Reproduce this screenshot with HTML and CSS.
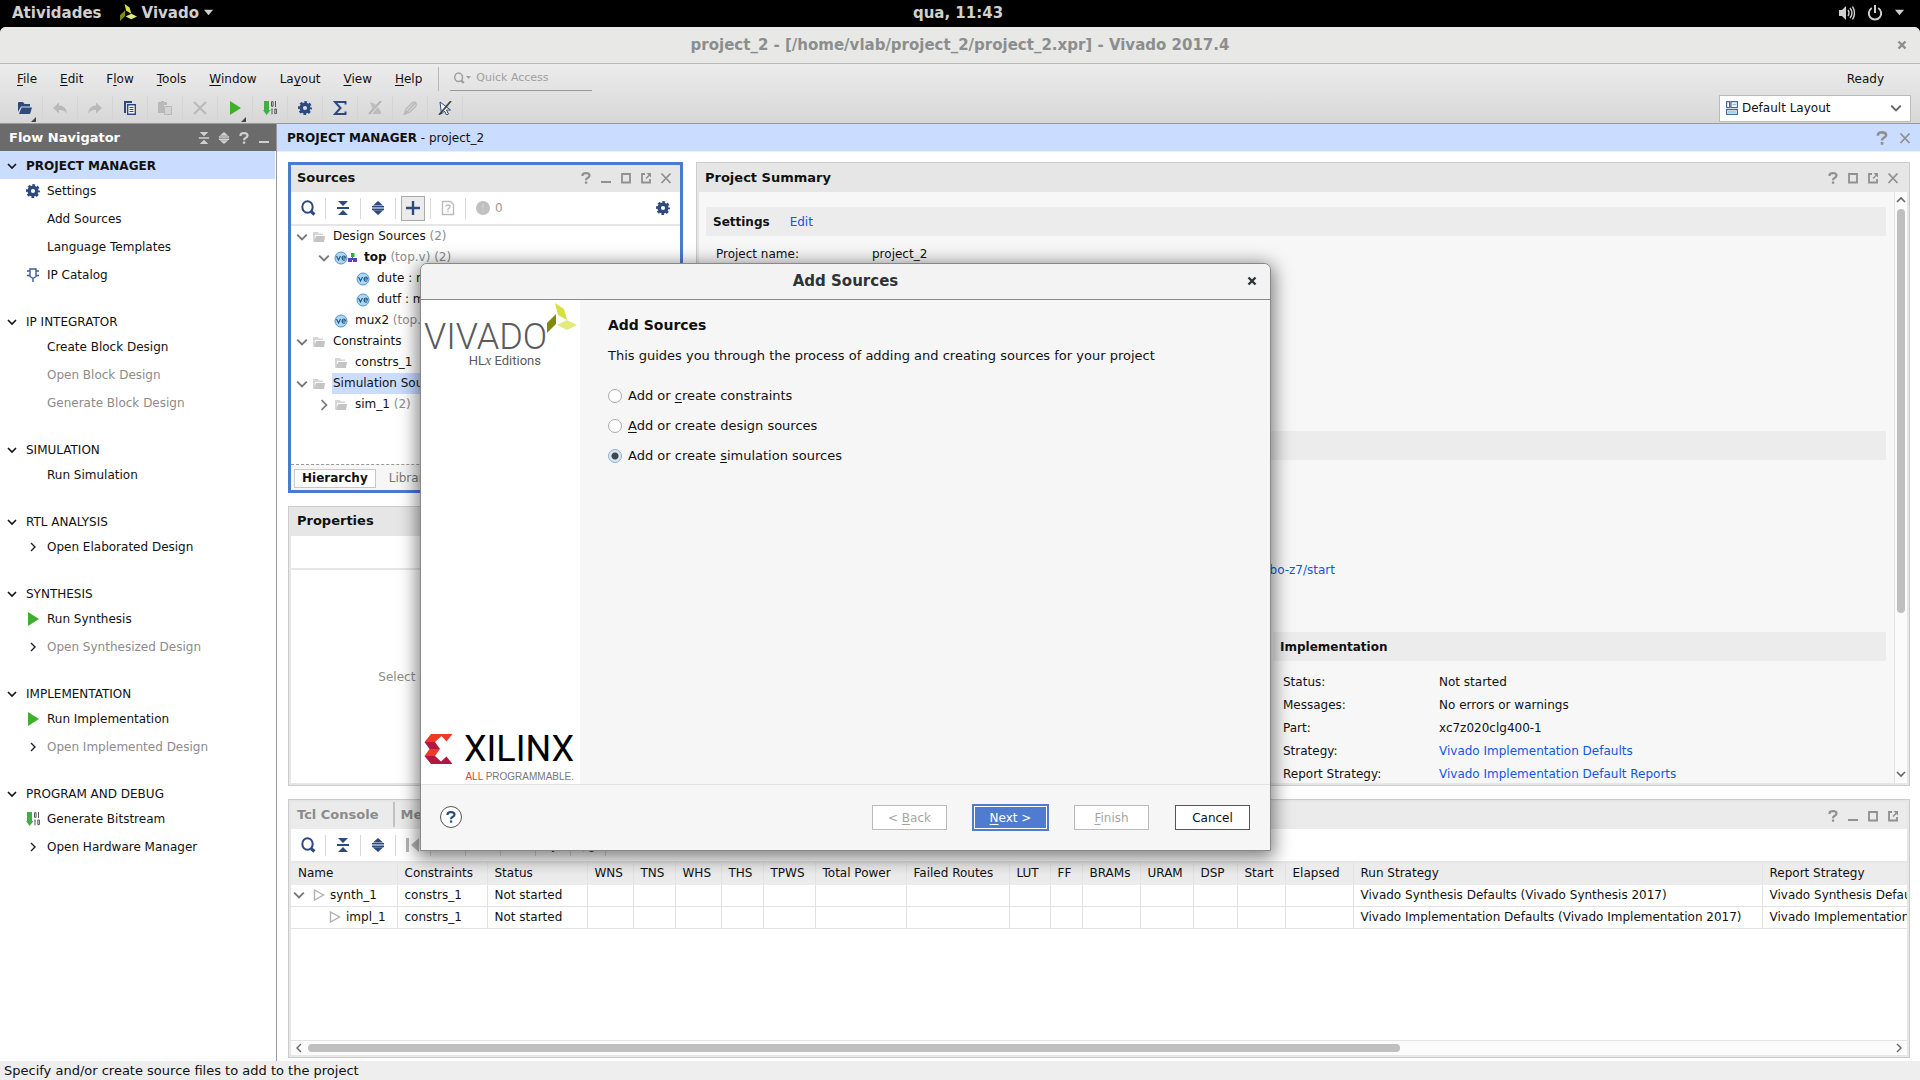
FILE: index.html
```html
<!DOCTYPE html>
<html lang="en">
<head>
<meta charset="utf-8">
<title>Vivado 2017.4</title>
<link rel="stylesheet" href="styles.css">
</head>
<body>
<svg class="sprite" aria-hidden="true">
  <symbol id="leaf" viewBox="0 0 30 30"><path d="M8 0l9 6 3 11-9-5z" fill="#d5e13c"/><path d="M0 20l9-9v10l-9 9z" fill="#828a0e"/><path d="M10 22l10-5 10 5-10 5z" fill="#e3ea7c"/></symbol>
  <symbol id="down" viewBox="0 0 10 10"><path d="M1 3l4 4 4-4" fill="none" stroke="currentColor" stroke-width="1.600"/></symbol>
  <symbol id="right" viewBox="0 0 10 10"><path d="M3 1l4 4-4 4" fill="none" stroke="currentColor" stroke-width="1.4"/></symbol>
  <symbol id="caret" viewBox="0 0 10 10"><path d="M0 2h10L5 8z" fill="currentColor"/></symbol>
  <symbol id="help" viewBox="0 0 12 12"><path d="M2.500 4V3.500Q2.500 1.200 6 1.200T9.500 3.600Q9.500 5 7.500 5.900 6 6.600 6 8.200" fill="none" stroke="currentColor" stroke-width="2.200"/><path d="M4.900 9.500h2.300v2.200H4.900z" fill="currentColor"/></symbol>
  <symbol id="min" viewBox="0 0 12 12"><path d="M1 9h10v2H1z" fill="currentColor"/></symbol>
  <symbol id="max" viewBox="0 0 12 12"><path d="M2 2h8v8.500H2z" fill="none" stroke="currentColor" stroke-width="1.800"/></symbol>
  <symbol id="float" viewBox="0 0 12 12"><path d="M5 2H2v8.500h8V7" fill="none" stroke="currentColor" stroke-width="1.800"/><path d="M6.500 1H11v4.500L9.500 4 6.500 7 5.500 6l3-3z" fill="currentColor"/></symbol>
  <symbol id="close" viewBox="0 0 12 12"><path d="M1.500 1.500l9 9.500M10.500 1.500l-9 9.500" fill="none" stroke="currentColor" stroke-width="1.800"/></symbol>
  <symbol id="wclose" viewBox="0 0 10 10"><path d="M1.500 1.500l7 7M8.500 1.500l-7 7" fill="none" stroke="currentColor" stroke-width="2.400"/></symbol>
  <symbol id="collapse" viewBox="0 0 14 14"><path d="M2 0h10L7 5zM2 14h10L7 9zM1 6h12v2H1z" fill="currentColor"/></symbol>
  <symbol id="expand" viewBox="0 0 14 14"><path d="M2 4.500h10L7 0zM2 9.500h10L7 14zM1 5h12v1.600H1zM1 7.600h12v1.600H1z" fill="currentColor"/></symbol>
  <symbol id="search" viewBox="0 0 16 16"><ellipse cx="7.500" cy="7" rx="5.200" ry="5.800" fill="none" stroke="currentColor" stroke-width="2"/><path d="M11 11.500l3.500 3" stroke="currentColor" stroke-width="3"/></symbol>
  <symbol id="plus" viewBox="0 0 14 14"><path d="M5.800 0h2.400v5.800H14v2.400H8.200V14H5.800V8.200H0V5.800h5.800z" fill="currentColor"/></symbol>
  <symbol id="gear" viewBox="0 0 14 14"><g stroke="currentColor" fill="none"><circle cx="7" cy="7" r="3.800" stroke-width="3.400"/><circle cx="7" cy="7" r="6" stroke-width="2" stroke-dasharray="2.700 2.012" stroke-dashoffset="1.350"/></g></symbol>
  <symbol id="filehelp" viewBox="0 0 14 16"><path d="M1.500 1.500h8l3 3v10h-11z" fill="none" stroke="currentColor" stroke-width="1.400"/><path d="M4.800 6.500Q5 5 7 5T9 6.800Q9 7.800 7 9v1M6.300 11.500h1.400" fill="none" stroke="currentColor" stroke-width="1.300"/></symbol>
  <symbol id="alert" viewBox="0 0 14 14"><circle cx="7" cy="7" r="7" fill="#c0c0c0"/><path d="M6.200 3h1.600v5H6.200zM6.200 9.500h1.600V11H6.200z" fill="#d0d0d0"/></symbol>
  <symbol id="folder" viewBox="0 0 14 12"><path d="M1 1h5l1 1.500h4V4H3v6L1 11z" fill="#d6d6d6"/><path d="M4 5h9l-1 6H2z" fill="#c4c4c4"/></symbol>
  <symbol id="module" viewBox="0 0 14 14"><circle cx="7" cy="7" r="6" fill="#a9d8f7" stroke="#5795c8"/><path d="M2.500 5l2 4 2-4M8 7h3.500Q11.300 5 9.800 5 8 5 8 7T9.900 9.200l1.400-.4" fill="none" stroke="#23507a" stroke-width="1.100"/></symbol>
  <symbol id="hier" viewBox="0 0 9 9"><path d="M3 0h3.500v4H3z" fill="#2fb12f"/><path d="M0 5h4v4H0zM5 5h4v4H5z" fill="#5a3fbf"/><path d="M4 4h1v3H4z" fill="#5a3fbf"/></symbol>
  <symbol id="chip" viewBox="0 0 14 14"><path d="M4 1h6v7.500l-3 2-3-2zM1 3h3M1 7.500h3M10 3h3M10 7.500h3M7 10v4" fill="none" stroke="#3c5c94" stroke-width="1.400"/></symbol>
  <symbol id="play" viewBox="0 0 12 14"><path d="M1 0l11 7-11 7z" fill="#3fb02b"/></symbol>
  <symbol id="playo" viewBox="0 0 12 12"><path d="M1.500 1l9 5-9 5z" fill="none" stroke="#b0b0b0" stroke-width="1.400"/></symbol>
  <symbol id="bits" viewBox="0 0 14 14"><path d="M1 0h5v9h1.500L3.600 14 0 9h1z" fill="#42ae48"/><path d="M8.500.7h1.600v4.600H8.500zM12.500 0v6M8.500 8h1M9 8v5.300M11.800 8h1.600v4.600h-1.600z" fill="none" stroke="#555"/></symbol>
  <symbol id="open" viewBox="0 0 14 12"><path d="M0 1q0-1 1-1h4l1.500 2H12v2.500H3L0 10z" fill="#2c4a80"/><path d="M3.500 5.500H14L12 12H1z" fill="#2c4a80"/></symbol>
  <symbol id="undo" viewBox="0 0 14 11"><path d="M6 0v3q7 0 8 8-3-4-8-3.500V11L0 5.500z" fill="#b9b9b9"/></symbol>
  <symbol id="redo" viewBox="0 0 14 11"><path d="M8 0v3Q1 3 0 11q3-4 8-3.500V11l6-5.500z" fill="#b9b9b9"/></symbol>
  <symbol id="copy" viewBox="0 0 12 14"><path d="M0 0h8v2H2v10H0z" fill="#2c4a80"/><path d="M3.700 3.700h7.600v9.600H3.700z" fill="#fff" stroke="#2c4a80" stroke-width="1.400"/><path d="M5.500 6.500h4M5.500 8.500h4M5.500 10.500h4" stroke="#2c4a80"/></symbol>
  <symbol id="paste" viewBox="0 0 14 14"><path d="M0 1h3V0h3v1h3v3H6v8H0z" fill="#b9b9b9"/><path d="M6.500 5.500h7v8h-7z" fill="#d3d3d3" stroke="#b9b9b9"/></symbol>
  <symbol id="cut" viewBox="0 0 14 14"><path d="M1 1l12 12M13 1L1 13" stroke="#b9b9b9" stroke-width="2"/></symbol>
  <symbol id="sigma" viewBox="0 0 14 14"><path d="M12.500 3.500V1H2l5.500 6L2 13h10.500v-2.500" fill="none" stroke="#2c4a80" stroke-width="2"/></symbol>
  <symbol id="mark1" viewBox="0 0 14 14"><path d="M1 13L13 0" stroke="#b4b4b4" stroke-width="2"/><path d="M2 1l5 2 1 3-3 3zM10 6l3 5v2H4z" fill="#bcbcbc"/></symbol>
  <symbol id="mark2" viewBox="0 0 14 14"><path d="M1.500 13l1.500-5 6-6q2-1.500 3.500 0t0 3.500l-6 6z" fill="none" stroke="#b9b9b9" stroke-width="1.400"/><path d="M1 14L13 1" stroke="#b9b9b9" stroke-width="1.800"/></symbol>
  <symbol id="mark3" viewBox="0 0 14 14"><path d="M2 1l1.500 12 3-3 2 4 2-1-2-4h4z" fill="#fff" stroke="#2c4a80"/><path d="M1 14L13 0" stroke="#444" stroke-width="1.800"/></symbol>
  <symbol id="first" viewBox="0 0 16 16"><path d="M1 1h3v14H1zM14 1v14L6 8z" fill="#b5b5b5"/></symbol>
  <symbol id="rew" viewBox="0 0 16 16"><path d="M7 2v12L0 8zM15 2v12L8 8z" fill="#b5b5b5"/></symbol>
  <symbol id="fwd" viewBox="0 0 16 16"><path d="M9 2v12l7-6zM1 2v12l7-6z" fill="#b5b5b5"/></symbol>
  <symbol id="pct" viewBox="0 0 14 14"><g fill="none" stroke="#2c4a80" stroke-width="1.800"><circle cx="3.500" cy="3.500" r="2.500"/><circle cx="10.500" cy="10.500" r="2.500"/><path d="M12 1L2 13"/></g></symbol>
  <symbol id="layout" viewBox="0 0 12 14"><path d="M.6.600h3v6h-3zM5 .600h6.400v6H5zM.6 8.600h10.800v4.800H.6z" fill="#fff" stroke="#4a6a9c" stroke-width="1.200"/><path d="M6.500 3.500h3.500M2 11h8" stroke="#7fc4e8" stroke-width="1.500"/></symbol>
  <symbol id="sound" viewBox="0 0 16 16"><path d="M0 5h3l4-4v14l-4-4H0z" fill="#d0d0d0"/><path d="M9 5q2 3 0 6M11 3q4 5 0 10M13.500 1.500q4 6.500 0 13" fill="none" stroke="#d0d0d0" stroke-width="1.400"/></symbol>
  <symbol id="power" viewBox="0 0 16 16"><path d="M4.800 3A6.200 6.200 0 1 0 11.200 3M8 0v8" fill="none" stroke="#d0d0d0" stroke-width="2"/></symbol>
  <symbol id="xlogo" viewBox="0 0 28 30"><path d="M6.500 0H28l-6 7.500L17 2l-6.500 6H0z" fill="#ef3b24"/><path d="M0 8h10.500l5 7-4.500 0H5z" fill="#b3173f"/><path d="M5 15h10.500l-5 7H0z" fill="#ef3b24"/><path d="M0 22h10.500l6 5.500L22 22.500l6 7.500H6.500z" fill="#b3173f"/></symbol>
</svg>

<header class="desktop-bar">
  <div class="desk-left"><span>Atividades</span><span class="app"><svg class="i14"><use href="#leaf"/></svg>Vivado <svg class="i9"><use href="#caret"/></svg></span></div>
  <span>qua, 11:43</span>
  <div class="desk-right"><svg class="i16"><use href="#sound"/></svg><svg class="i16"><use href="#power"/></svg><svg class="i9"><use href="#caret"/></svg></div>
</header>

<div class="window">
  <div class="titlebar"><h1>project_2 - [/home/vlab/project_2/project_2.xpr] - Vivado 2017.4</h1><button class="plain" aria-label="Close window"><svg class="i10"><use href="#wclose"/></svg></button></div>

  <div class="topbars">
    <div class="menurow">
      <nav class="menu"><button><u>F</u>ile</button><button><u>E</u>dit</button><button>F<u>l</u>ow</button><button><u>T</u>ools</button><button><u>W</u>indow</button><button>La<u>y</u>out</button><button><u>V</u>iew</button><button><u>H</u>elp</button></nav>
      <label class="quick"><svg class="i12"><use href="#search"/></svg><svg class="i5"><use href="#caret"/></svg><input type="text" placeholder="Quick Access" aria-label="Quick Access"></label>
      <span class="ready">Ready</span>
    </div>
    <div class="toolrow">
      <div class="tools">
        <button class="drop" aria-label="Open"><svg class="i14"><use href="#open"/></svg></button>
        <button aria-label="Undo"><svg class="i14"><use href="#undo"/></svg></button>
        <button aria-label="Redo"><svg class="i14"><use href="#redo"/></svg></button>
        <button aria-label="Copy"><svg class="i14"><use href="#copy"/></svg></button>
        <button aria-label="Paste"><svg class="i14"><use href="#paste"/></svg></button>
        <button aria-label="Delete"><svg class="i14"><use href="#cut"/></svg></button>
        <button class="drop" aria-label="Run"><svg class="i14"><use href="#play"/></svg></button>
        <button aria-label="Bitstream"><svg class="i14"><use href="#bits"/></svg></button>
        <button class="blue" aria-label="Settings"><svg class="i14"><use href="#gear"/></svg></button>
        <button aria-label="Reports"><svg class="i14"><use href="#sigma"/></svg></button>
        <button aria-label="Marks"><svg class="i14"><use href="#mark1"/></svg></button>
        <button aria-label="Highlights"><svg class="i14"><use href="#mark2"/></svg></button>
        <button aria-label="Selection"><svg class="i14"><use href="#mark3"/></svg></button>
      </div>
      <label class="layout-pick"><svg class="i14"><use href="#layout"/></svg><select aria-label="Layout"><option>Default Layout</option></select><svg class="i12"><use href="#down"/></svg></label>
    </div>
  </div>

  <div class="main">
    <aside class="navigator">
      <div class="nav-head"><h2>Flow Navigator</h2><span class="ctl"><svg class="i12"><use href="#collapse"/></svg><svg class="i12"><use href="#expand"/></svg><svg class="i12"><use href="#help"/></svg><svg class="i12"><use href="#min"/></svg></span></div>
      <section><h3 class="current"><svg class="i10"><use href="#down"/></svg>PROJECT MANAGER</h3>
        <ul><li><svg class="i14 blue"><use href="#gear"/></svg>Settings</li><li>Add Sources</li><li>Language Templates</li><li><svg class="i14"><use href="#chip"/></svg>IP Catalog</li></ul></section>
      <section><h3><svg class="i10"><use href="#down"/></svg>IP INTEGRATOR</h3>
        <ul><li>Create Block Design</li><li class="off">Open Block Design</li><li class="off">Generate Block Design</li></ul></section>
      <section><h3><svg class="i10"><use href="#down"/></svg>SIMULATION</h3>
        <ul><li>Run Simulation</li></ul></section>
      <section><h3><svg class="i10"><use href="#down"/></svg>RTL ANALYSIS</h3>
        <ul><li><svg class="i10"><use href="#right"/></svg>Open Elaborated Design</li></ul></section>
      <section><h3><svg class="i10"><use href="#down"/></svg>SYNTHESIS</h3>
        <ul><li><svg class="i14"><use href="#play"/></svg>Run Synthesis</li><li class="off"><svg class="i10"><use href="#right"/></svg>Open Synthesized Design</li></ul></section>
      <section><h3><svg class="i10"><use href="#down"/></svg>IMPLEMENTATION</h3>
        <ul><li><svg class="i14"><use href="#play"/></svg>Run Implementation</li><li class="off"><svg class="i10"><use href="#right"/></svg>Open Implemented Design</li></ul></section>
      <section><h3><svg class="i10"><use href="#down"/></svg>PROGRAM AND DEBUG</h3>
        <ul><li><svg class="i14"><use href="#bits"/></svg>Generate Bitstream</li><li><svg class="i10"><use href="#right"/></svg>Open Hardware Manager</li></ul></section>
    </aside>

    <div class="work">
      <div class="work-head"><h2><b>PROJECT MANAGER</b> - project_2</h2><span class="ctl"><svg class="i14"><use href="#help"/></svg><svg class="i12"><use href="#close"/></svg></span></div>
      <div class="docks">
        <div class="upper">
          <div class="side">
            <section class="panel focused sources">
              <div class="panel-head"><h2>Sources</h2><span class="ctl"><svg class="i12"><use href="#help"/></svg><svg class="i12"><use href="#min"/></svg><svg class="i12"><use href="#max"/></svg><svg class="i12"><use href="#float"/></svg><svg class="i12"><use href="#close"/></svg></span></div>
              <div class="bar"><button aria-label="Search"><svg class="i16"><use href="#search"/></svg></button><button aria-label="Collapse all"><svg class="i14"><use href="#collapse"/></svg></button><button aria-label="Expand all"><svg class="i14"><use href="#expand"/></svg></button><button aria-label="Add sources"><span class="pressed"><svg class="i14"><use href="#plus"/></svg></span></button><button class="dim" aria-label="File info"><svg class="i16"><use href="#filehelp"/></svg></button><span class="count"><svg class="i14"><use href="#alert"/></svg>0</span><button class="end" aria-label="Sources settings"><svg class="i14"><use href="#gear"/></svg></button></div>
              <ul class="tree">
                <li><svg class="i12 tog"><use href="#down"/></svg><svg class="i14 ico"><use href="#folder"/></svg><span>Design Sources <i>(2)</i></span></li>
                <li class="l1"><svg class="i12 tog"><use href="#down"/></svg><svg class="i14"><use href="#module"/></svg><svg class="i9 hi"><use href="#hier"/></svg><span><b>top</b> <i>(top.v) (2)</i></span></li>
                <li class="l3"><svg class="i14 ico"><use href="#module"/></svg><span>dute : mux2</span></li>
                <li class="l3"><svg class="i14 ico"><use href="#module"/></svg><span>dutf : mux2</span></li>
                <li class="l2"><svg class="i14 ico"><use href="#module"/></svg><span>mux2 <i>(top.v)</i></span></li>
                <li><svg class="i12 tog"><use href="#down"/></svg><svg class="i14 ico"><use href="#folder"/></svg><span>Constraints</span></li>
                <li class="l2"><svg class="i14 ico"><use href="#folder"/></svg><span>constrs_1</span></li>
                <li><svg class="i12 tog"><use href="#down"/></svg><svg class="i14 ico"><use href="#folder"/></svg><span class="sel">Simulation Sources</span></li>
                <li class="l1"><svg class="i12 tog"><use href="#right"/></svg><svg class="i14 ico"><use href="#folder"/></svg><span>sim_1 <i>(2)</i></span></li>
              </ul>
              <div class="tabs"><button class="on">Hierarchy</button><button>Libraries</button></div>
            </section>
            <section class="panel props">
              <div class="panel-head"><h2>Properties</h2></div>
              <div class="bar"></div>
              <p class="empty">Select an object to see properties</p>
            </section>
          </div>
          <section class="panel summary">
            <div class="panel-head"><h2>Project Summary</h2><span class="ctl"><svg class="i12"><use href="#help"/></svg><svg class="i12"><use href="#max"/></svg><svg class="i12"><use href="#float"/></svg><svg class="i12"><use href="#close"/></svg></span></div>
            <div class="sum-body">
              <div class="sum-text">
                <div class="band"><b>Settings</b><a href="#">Edit</a></div>
                <dl class="facts general"><dt>Project name:</dt><dd>project_2</dd></dl>
                <div class="band"></div>
                <p class="board"><a href="#">zybo-z7/start</a></p>
                <div class="impl">
                  <div class="band"><b>Implementation</b></div>
                  <dl class="facts"><dt>Status:</dt><dd>Not started</dd><dt>Messages:</dt><dd>No errors or warnings</dd><dt>Part:</dt><dd>xc7z020clg400-1</dd><dt>Strategy:</dt><dd><a href="#">Vivado Implementation Defaults</a></dd><dt>Report Strategy:</dt><dd><a href="#">Vivado Implementation Default Reports</a></dd></dl>
                </div>
              </div>
              <div class="vscroll"><svg class="i10 flip"><use href="#down"/></svg><span class="track"><span class="thumb"></span></span><svg class="i10"><use href="#down"/></svg></div>
            </div>
          </section>
        </div>

        <section class="panel runs">
          <div class="panel-head"><div class="run-tabs"><button>Tcl Console</button><button>Messages</button></div><span class="ctl"><svg class="i12"><use href="#help"/></svg><svg class="i12"><use href="#min"/></svg><svg class="i12"><use href="#max"/></svg><svg class="i12"><use href="#float"/></svg></span></div>
          <div class="bar"><button aria-label="Search"><svg class="i16"><use href="#search"/></svg></button><button aria-label="Collapse all"><svg class="i14"><use href="#collapse"/></svg></button><button aria-label="Expand all"><svg class="i14"><use href="#expand"/></svg></button><button aria-label="First"><svg class="i16"><use href="#first"/></svg></button><button aria-label="Rewind"><svg class="i14"><use href="#rew"/></svg></button><button class="dim" aria-label="Run"><svg class="i12"><use href="#playo"/></svg></button><button aria-label="Forward"><svg class="i14"><use href="#fwd"/></svg></button><button aria-label="Create run"><svg class="i14"><use href="#plus"/></svg></button><button aria-label="Percent"><svg class="i14"><use href="#pct"/></svg></button></div>
          <div class="grid-view">
            <table>
              <colgroup><col class="c106"><col class="c90"><col class="c100"><col class="c46"><col class="c42"><col class="c46"><col class="c42"><col class="c52"><col class="c91"><col class="c103"><col class="c41"><col class="c32"><col class="c58"><col class="c53"><col class="c44"><col class="c48"><col class="c68"><col class="c409"><col class="c300"></colgroup>
              <thead><tr><th>Name</th><th>Constraints</th><th>Status</th><th>WNS</th><th>TNS</th><th>WHS</th><th>THS</th><th>TPWS</th><th>Total Power</th><th>Failed Routes</th><th>LUT</th><th>FF</th><th>BRAMs</th><th>URAM</th><th>DSP</th><th>Start</th><th>Elapsed</th><th>Run Strategy</th><th>Report Strategy</th></tr></thead>
              <tbody>
                <tr><td class="name"><div><svg class="i12 tog"><use href="#down"/></svg><svg class="i12"><use href="#playo"/></svg>synth_1</div></td><td>constrs_1</td><td>Not started</td><td></td><td></td><td></td><td></td><td></td><td></td><td></td><td></td><td></td><td></td><td></td><td></td><td></td><td></td><td>Vivado Synthesis Defaults (Vivado Synthesis 2017)</td><td>Vivado Synthesis Default Reports</td></tr>
                <tr><td class="name"><div class="child"><svg class="i12"><use href="#playo"/></svg>impl_1</div></td><td>constrs_1</td><td>Not started</td><td></td><td></td><td></td><td></td><td></td><td></td><td></td><td></td><td></td><td></td><td></td><td></td><td></td><td></td><td>Vivado Implementation Defaults (Vivado Implementation 2017)</td><td>Vivado Implementation Default Reports</td></tr>
              </tbody>
            </table>
          </div>
          <div class="hscroll"><svg class="i10 flip"><use href="#right"/></svg><span class="track"><span class="thumb"></span></span><svg class="i10"><use href="#right"/></svg></div>
        </section>
      </div>
    </div>
  </div>
</div>
<footer class="status">Specify and/or create source files to add to the project</footer>

<form class="dialog" role="dialog" aria-labelledby="dlg-title">
  <div class="dlg-bar"><h2 id="dlg-title">Add Sources</h2><button type="button" class="plain" aria-label="Close dialog"><svg class="i10"><use href="#wclose"/></svg></button></div>
  <div class="dlg-body">
    <div class="brand">
      <div class="vivado"><span>VIVADO</span><svg class="i30"><use href="#leaf"/></svg><small>HL<i>x</i> Editions</small></div>
      <div class="xilinx"><svg class="xl"><use href="#xlogo"/></svg><span>XILINX</span><small><em>ALL</em> PROGRAMMABLE.</small></div>
    </div>
    <div class="choices">
      <h3>Add Sources</h3>
      <p>This guides you through the process of adding and creating sources for your project</p>
      <label><input type="radio" name="kind"><span>Add or <u>c</u>reate constraints</span></label>
      <label><input type="radio" name="kind"><span><u>A</u>dd or create design sources</span></label>
      <label><input type="radio" name="kind" checked><span>Add or create <u>s</u>imulation sources</span></label>
    </div>
  </div>
  <div class="dlg-foot">
    <button type="button" class="round" aria-label="Help"><svg class="i12"><use href="#help"/></svg></button>
    <button type="button" class="btn" disabled><span>&lt; <u>B</u>ack</span></button>
    <button type="button" class="btn primary"><span><u>N</u>ext &gt;</span></button>
    <button type="button" class="btn" disabled><span><u>F</u>inish</span></button>
    <button type="button" class="btn strong">Cancel</button>
  </div>
</form>
</body>
</html>
```
FILE: styles.css
```css
* { box-sizing: border-box; }
body { margin: 0; height: 100vh; display: flex; flex-direction: column; background: #000; color: #111; font: 12px/20px "DejaVu Sans", sans-serif; overflow: hidden; white-space: nowrap; }
h1, h2, h3, p, ul, dl, dd { margin: 0; padding: 0; font-size: 12px; }
ul { list-style: none; }
button, input, select { font: inherit; color: inherit; border: 0; background: none; margin: 0; padding: 0; border-radius: 0; }
a { color: #1156e8; text-decoration: none; }
svg { display: block; flex: none; }
u { text-underline-offset: 2px; }
.sprite { position: absolute; width: 0; height: 0; }
.i5 { width: 5px; height: 5px; } .i9 { width: 9px; height: 9px; } .i10 { width: 10px; height: 10px; }
.i12 { width: 12px; height: 12px; } .i14 { width: 14px; height: 14px; } .i16 { width: 16px; height: 16px; } .i30 { width: 30px; height: 30px; }
.blue { color: #2c4a80; }
.flip { transform: rotate(180deg); }

.desktop-bar { flex: none; height: 27px; display: grid; grid-template-columns: 1fr auto 1fr; align-items: center; padding: 0 16px 2px 12px; color: #d0d0d0; font-size: 15px; font-weight: bold; }
.desk-left, .app, .desk-right { display: flex; align-items: center; }
.desk-left { gap: 18px; } .app { gap: 5px; } .desk-right { justify-content: flex-end; gap: 12px; }
.app .i14 { width: 17px; height: 19px; }

.window { flex: 1; min-height: 0; display: flex; flex-direction: column; background: #fff; border-radius: 6px 6px 0 0; overflow: hidden; }
.titlebar { flex: none; height: 37px; display: grid; grid-template-columns: 1fr auto 1fr; align-items: center; padding: 0 13px; background: #e8e8e6; border-bottom: 1px solid #b9b9b7; color: #8b8e8f; }
.titlebar h1 { grid-column: 2; font-size: 15px; }
.plain { justify-self: end; }

.topbars { flex: none; height: 60px; border-bottom: 1px solid #999; background: linear-gradient(#ececec, #d7d7d7); }
.menurow { height: 28px; display: flex; align-items: center; padding: 2px 36px 0 17px; }
.menu { display: flex; gap: 23px; }
.quick { display: flex; align-items: center; gap: 1px; margin-left: 16px; height: 24px; width: 154px; padding: 0 0 3px 14px; border-left: 1px solid #b9b9b9; color: #a0a0a0; background: linear-gradient(#999, #999) right bottom / 142px 1px no-repeat; }
.quick input { width: 116px; height: 20px; margin-left: 4px; font-size: 11px; outline: 0; }
.quick input::placeholder { color: #a0a0a0; opacity: 1; }
.ready { margin-left: auto; }
.toolrow { height: 31px; display: flex; align-items: center; justify-content: space-between; padding: 1px 9px 0 8px; }
.tools { display: flex; }
.tools button { width: 35px; height: 24px; display: grid; place-items: center; border-right: 1px solid #d4d4d4; position: relative; }
.tools .drop::after { content: ""; position: absolute; right: 6px; bottom: -2px; border: solid transparent; border-width: 0 0 5px 5px; border-bottom-color: #444; }
.layout-pick { width: 192px; height: 27px; display: flex; align-items: center; gap: 3px; padding: 0 8px 0 5px; background: #fff; border: 1px solid #bbb; color: #666; }
.layout-pick select { flex: 1; appearance: none; color: #111; outline: 0; }

.main { flex: 1; min-height: 0; display: flex; }
.navigator { flex: none; width: 277px; border-right: 1px solid #999; }
.nav-head, .work-head { height: 27px; display: flex; align-items: center; justify-content: space-between; }
.nav-head { background: #6b6b6b; color: #fff; padding: 0 6px 0 9px; }
.nav-head h2, .panel-head h2 { font-size: 13px; }
.ctl { display: flex; gap: 8px; color: #909090; align-items: center; }
.nav-head .ctl { color: #d0d0d0; }
.navigator section { margin-bottom: 19px; }
.navigator h3 { height: 28px; display: flex; align-items: center; gap: 9px; padding: 2px 0 0 7px; font-weight: normal; }
.navigator h3.current { background: #cadcff; font-weight: bold; margin-right: 1px; }
.navigator ul { margin-top: -3px; }
.navigator li { height: 28px; padding: 2px 0 0 47px; display: flex; align-items: center; }
.navigator li svg { margin-left: -21px; margin-right: 7px; }
.navigator li svg.i10 { margin-left: -19px; margin-right: 9px; color: #222; }
.off { color: #8b8b8b; }

.work { flex: 1; min-width: 0; display: flex; flex-direction: column; }
.work-head { flex: none; background: #cadcff; padding: 0 9px 0 10px; height: 28px; border-bottom: 1px solid #e6eeff; }
.work-head h2 { font-weight: normal; }
.work-head .ctl { gap: 10px; }
.docks { flex: 1; min-height: 0; display: flex; flex-direction: column; gap: 13px; padding: 10px 10px 3px 11px; }
.upper { flex: 1; min-height: 0; display: flex; gap: 13px; }
.side { flex: none; width: 395px; display: flex; flex-direction: column; gap: 13px; }
.panel { display: flex; flex-direction: column; border: 1px solid #ccc; box-shadow: inset 0 0 0 2px #e6e6e6; padding: 2px; background: #fff; min-width: 0; min-height: 0; }
.panel.focused { border: 3px solid #4a7bd0; padding: 0; box-shadow: none; }
.sources { flex: 331 1 0; } .props { flex: 280 1 0; }
.panel-head { flex: none; height: 27px; display: flex; align-items: center; justify-content: space-between; padding: 0 8px 2px 6px; background: #e6e6e6; }
.bar { flex: none; height: 34px; display: flex; align-items: center; border-bottom: 2px solid #e6e6e6; color: #2c4a80; }
.bar button { width: 35px; height: 21px; display: grid; place-items: center; border-right: 1px solid #d8d8d8; }
.bar .end { margin-left: auto; border: 0; }
.bar .dim { color: #bbb; }
.pressed { width: 24px; height: 25px; margin: -2px 0; display: grid; place-items: center; border: 1px solid #aaa; background: #ebebeb; }
.count { display: flex; align-items: center; gap: 5px; padding-left: 10px; color: #999; }
.tree { flex: 1; line-height: 21px; overflow: hidden; }
.tree li { display: flex; align-items: center; height: 21px; padding-left: 5px; }
.tree .tog, .name .tog { color: #777; margin-right: 4px; }
.tree .ico { margin-right: 6px; }
.tree .hi { margin-right: 6px; }
.tree li span { padding: 0 1px; }
.tree .l1 { padding-left: 27px; } .tree .l2 { padding-left: 43px; } .tree .l3 { padding-left: 65px; }
.tree i { font-style: normal; color: #8b8b8b; }
.tree .sel { background: #cadcff; }
.tabs { flex: none; height: 26px; display: flex; align-items: center; padding: 2px 3px 0; background: #f6f6f6; border-top: 1px dashed #999; }
.tabs button { height: 19px; line-height: 17px; padding: 0 13px; color: #777; }
.tabs .on { padding: 0 7px; background: #fff; border: 1px solid #c8c8c8; color: #111; font-weight: bold; }
.empty { flex: 1; display: grid; place-items: center; padding: 2px 12px 0 0; color: #8b8b8b; }

.summary { flex: 1; }
.sum-body { flex: 1; min-height: 0; display: flex; background: #f7f7f7; }
.sum-text { flex: 1; padding: 15px 8px 0 7px; overflow: hidden; }
.band { height: 29px; display: flex; align-items: center; gap: 20px; padding-left: 7px; background: #ececec; }
.facts { display: grid; grid-template-columns: 156px 1fr; grid-auto-rows: 23px; line-height: 23px; padding: 10px 0 0 10px; }
.general { padding: 7px 0 165px 10px; }
.board { padding: 100px 0 52px 579px; }
.board a { display: block; width: 50px; direction: rtl; }
.impl { margin-left: 567px; }
.vscroll { flex: none; width: 13px; display: flex; flex-direction: column; align-items: center; padding: 3px 0 4px; border-left: 1px solid #e2e2e2; background: #fbfbfb; color: #666; }
.track { flex: 1; display: block; }
.vscroll .track { margin: 4px 0 6px; }
.vscroll .thumb { display: block; width: 8px; height: 73%; border-radius: 4px; background: #bfbfbf; }

.runs { flex: none; height: 259px; }
.runs .panel-head { background: #ebebeb; height: 27px; padding-bottom: 0; }
.run-tabs { display: flex; height: 25px; align-self: flex-start; }
.run-tabs button { padding-right: 14px; margin-right: 6px; border-right: 2px solid #c2c2c2; color: #8b8b8b; font-weight: bold; font-size: 13px; }
.grid-view { flex: 1; min-height: 0; overflow: hidden; }
table { table-layout: fixed; width: 1771px; border-collapse: collapse; }
th, td { height: 22px; padding: 0 0 1px 7px; line-height: 20px; text-align: left; font-weight: normal; overflow: hidden; border: solid #e2e2e2; border-width: 0 1px 1px 0; }
th { height: 21px; padding-bottom: 0; background: #ececec; border-bottom-color: #ececec; }
td.name { padding-left: 2px; }
.name div { display: flex; align-items: center; gap: 5px; }
.name .tog { margin-right: 3px; }
.name .child { padding-left: 36px; }
.c106 { width: 106px; } .c90 { width: 90px; } .c100 { width: 100px; } .c46 { width: 46px; } .c42 { width: 42px; } .c52 { width: 52px; }
.c91 { width: 91px; } .c103 { width: 103px; } .c41 { width: 41px; } .c32 { width: 32px; } .c58 { width: 58px; } .c53 { width: 53px; }
.c44 { width: 44px; } .c48 { width: 48px; } .c68 { width: 68px; } .c409 { width: 409px; } .c300 { width: 300px; }
.hscroll { flex: none; height: 15px; display: flex; align-items: center; padding: 0 3px 1px; border-top: 1px solid #e2e2e2; background: #fbfbfb; color: #666; }
.hscroll .track { margin: 0 4px; }
.hscroll .thumb { display: block; width: 69%; height: 8px; border-radius: 4px; background: #bfbfbf; }
.status { flex: none; height: 19px; line-height: 19px; padding-left: 4px; background: #eee; font-size: 13px; }

.dialog { position: absolute; left: 420px; top: 263px; width: 851px; height: 588px; display: flex; flex-direction: column; background: #f6f6f6; border: 1px solid #888; border-radius: 7px 7px 0 0; box-shadow: 0 4px 18px 3px rgba(0, 0, 0, 0.5); overflow: hidden; }
.dlg-bar { flex: none; height: 36px; display: grid; grid-template-columns: 1fr auto 1fr; align-items: center; padding: 0 13px 1px; background: #f3f3f3; border-bottom: 1px solid #888; color: #2e3436; }
.dlg-bar h2 { grid-column: 2; font-size: 15px; }
.dlg-body { flex: 1; display: flex; }
.brand { width: 159px; display: flex; flex-direction: column; justify-content: space-between; background: #fff; padding: 3px 3px 0; font-family: Roboto, sans-serif; }
.vivado { display: grid; grid-template-columns: 1fr auto; color: #5b5b5b; }
.vivado span { font-size: 36px; line-height: 32px; font-weight: 300; padding-top: 18px; }
.vivado small { grid-column: 1 / 3; font-size: 13px; line-height: 16px; padding: 0 36px 0 0; text-align: right; }
.vivado i { font-family: "Liberation Serif", serif; font-size: 14px; }
.vivado .i30 { margin-left: -4px; }
.xilinx { display: grid; grid-template-columns: 30px 1fr; align-items: center; column-gap: 10px; }
.xl { width: 29px; height: 30px; }
.xilinx span { font-family: "Liberation Sans Narrow", Roboto, sans-serif; font-size: 36px; line-height: 42px; color: #000; }
.xilinx small { grid-column: 1 / 3; text-align: right; font-size: 10px; line-height: 14px; padding-right: 3px; color: #777; font-family: "Liberation Sans", sans-serif; }
.xilinx em { font-style: normal; color: #ef3b24; }
.choices { padding: 15px 28px; font-size: 13px; }
.choices h3 { font-size: 14px; margin-bottom: 11px; }
.choices p { margin-bottom: 15px; font-size: 13px; }
.choices label { display: flex; align-items: center; gap: 6px; height: 30px; }
.choices input { appearance: none; width: 14px; height: 14px; border: 1px solid #aaa; border-radius: 50%; background: #fff; }
.choices input:checked { border-color: #8fb0cc; background: radial-gradient(circle, #444 0 3px, #d5e8f8 4px); }
.dlg-foot { flex: none; height: 66px; display: flex; align-items: center; gap: 26px; padding: 0 20px 0 19px; border-top: 1px solid #e2e2e2; }
.round { width: 22px; height: 22px; display: grid; place-items: center; margin: 0 auto 2px 0; border: 1px solid #555; border-radius: 50%; background: #fff; color: #2c4a80; }
.btn { width: 75px; height: 25px; border: 1px solid #bbb; background: #fff; }
.btn:disabled { color: #a5a5a5; }
.btn.strong { border-color: #555; }
.btn.primary { width: 73px; height: 23px; margin: 0 1px; border-color: #fff; outline: 2px solid #4f7bd0; background: #4f7bd0; color: #fff; }
```
